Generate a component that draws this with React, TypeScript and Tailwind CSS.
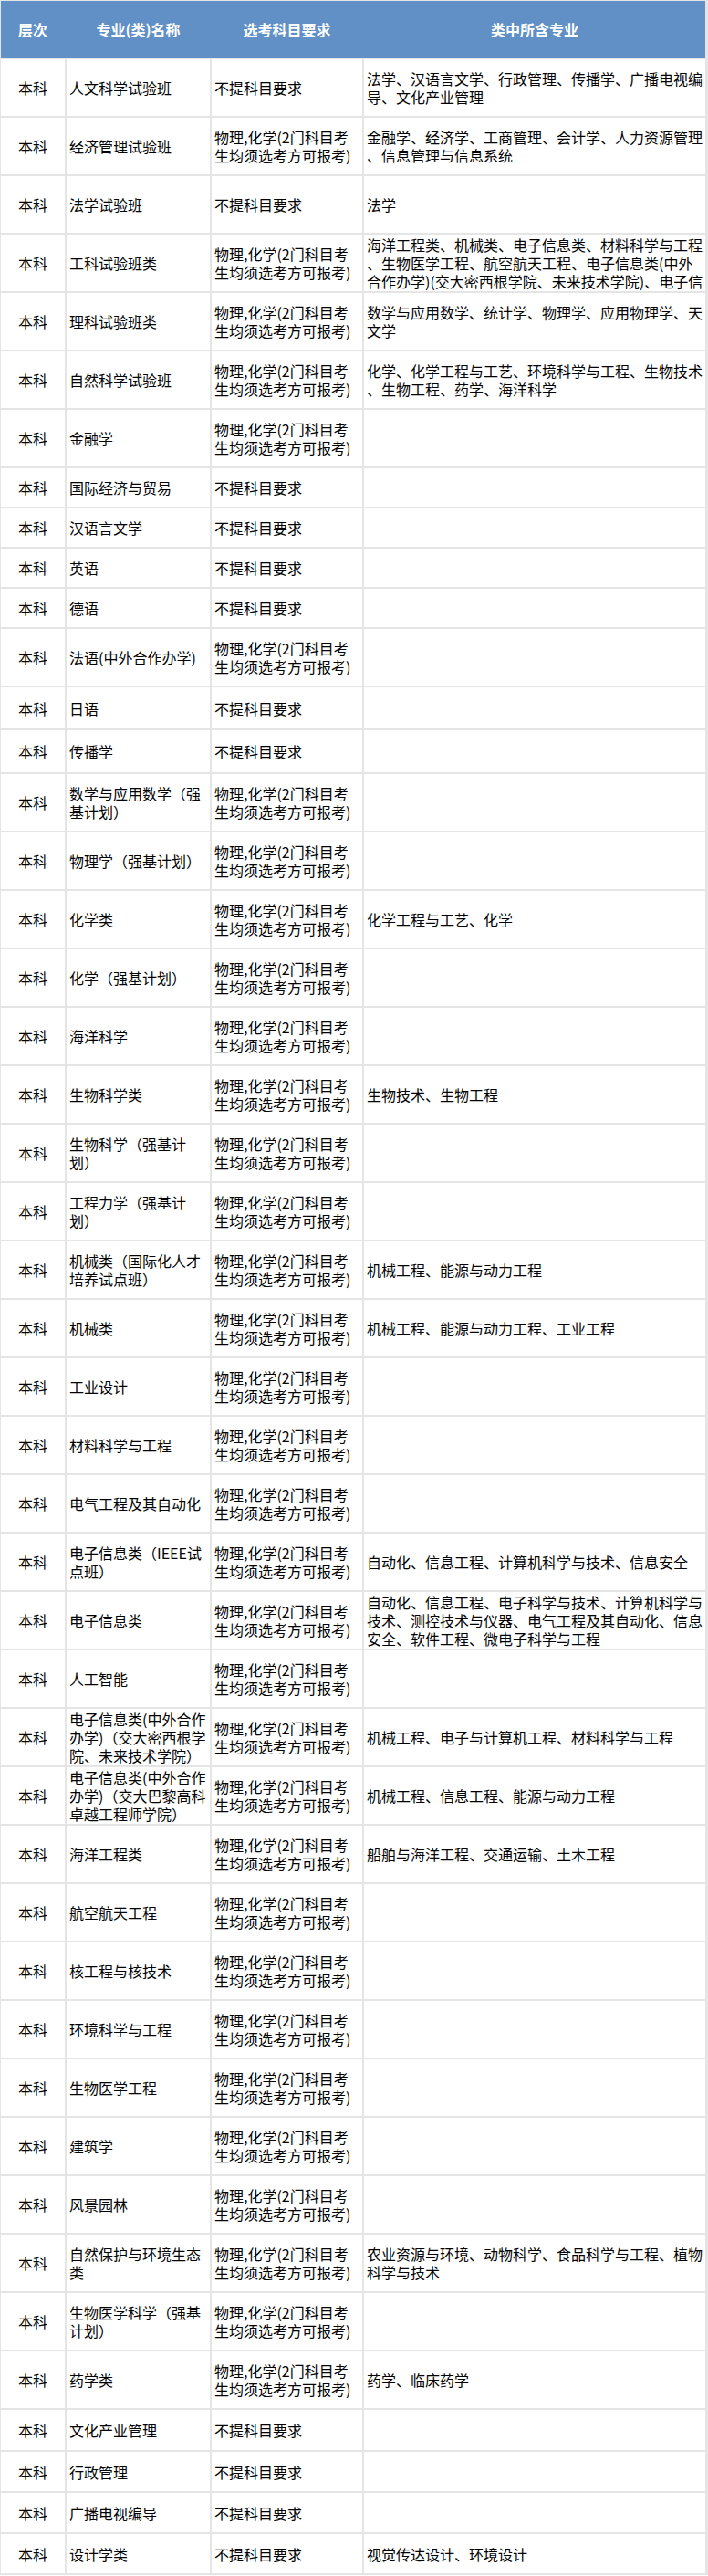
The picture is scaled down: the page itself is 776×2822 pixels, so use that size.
import React from 'react';

type Row = {
  name: string[];
  req: 'none' | 'pc';
  includes: string[];
  h: string;
};

const H62 = 'h-[62px]';

const rows: Row[] = [
  { name: ['人文科学试验班'], req: 'none', includes: ['法学、汉语言文学、行政管理、传播学、广播电视编', '导、文化产业管理'], h: H62 },
  { name: ['经济管理试验班'], req: 'pc', includes: ['金融学、经济学、工商管理、会计学、人力资源管理', '、信息管理与信息系统'], h: H62 },
  { name: ['法学试验班'], req: 'none', includes: ['法学'], h: H62 },
  {
    name: ['工科试验班类'],
    req: 'pc',
    includes: ['海洋工程类、机械类、电子信息类、材料科学与工程', '、生物医学工程、航空航天工程、电子信息类(中外', '合作办学)(交大密西根学院、未来技术学院)、电子信'],
    h: H62,
  },
  { name: ['理科试验班类'], req: 'pc', includes: ['数学与应用数学、统计学、物理学、应用物理学、天', '文学'], h: H62 },
  { name: ['自然科学试验班'], req: 'pc', includes: ['化学、化学工程与工艺、环境科学与工程、生物技术', '、生物工程、药学、海洋科学'], h: H62 },
  { name: ['金融学'], req: 'pc', includes: [], h: H62 },
  { name: ['国际经济与贸易'], req: 'none', includes: [], h: 'h-[42px]' },
  { name: ['汉语言文学'], req: 'none', includes: [], h: 'h-[42px]' },
  { name: ['英语'], req: 'none', includes: [], h: 'h-[42px]' },
  { name: ['德语'], req: 'none', includes: [], h: 'h-[42px]' },
  { name: ['法语(中外合作办学)'], req: 'pc', includes: [], h: H62 },
  { name: ['日语'], req: 'none', includes: [], h: 'h-[45px]' },
  { name: ['传播学'], req: 'none', includes: [], h: 'h-[46px]' },
  { name: ['数学与应用数学（强', '基计划）'], req: 'pc', includes: [], h: H62 },
  { name: ['物理学（强基计划）'], req: 'pc', includes: [], h: H62 },
  { name: ['化学类'], req: 'pc', includes: ['化学工程与工艺、化学'], h: H62 },
  { name: ['化学（强基计划）'], req: 'pc', includes: [], h: H62 },
  { name: ['海洋科学'], req: 'pc', includes: [], h: H62 },
  { name: ['生物科学类'], req: 'pc', includes: ['生物技术、生物工程'], h: H62 },
  { name: ['生物科学（强基计', '划）'], req: 'pc', includes: [], h: H62 },
  { name: ['工程力学（强基计', '划）'], req: 'pc', includes: [], h: H62 },
  { name: ['机械类（国际化人才', '培养试点班）'], req: 'pc', includes: ['机械工程、能源与动力工程'], h: H62 },
  { name: ['机械类'], req: 'pc', includes: ['机械工程、能源与动力工程、工业工程'], h: H62 },
  { name: ['工业设计'], req: 'pc', includes: [], h: H62 },
  { name: ['材料科学与工程'], req: 'pc', includes: [], h: H62 },
  { name: ['电气工程及其自动化'], req: 'pc', includes: [], h: H62 },
  { name: ['电子信息类（IEEE试', '点班）'], req: 'pc', includes: ['自动化、信息工程、计算机科学与技术、信息安全'], h: H62 },
  {
    name: ['电子信息类'],
    req: 'pc',
    includes: ['自动化、信息工程、电子科学与技术、计算机科学与', '技术、测控技术与仪器、电气工程及其自动化、信息', '安全、软件工程、微电子科学与工程'],
    h: H62,
  },
  { name: ['人工智能'], req: 'pc', includes: [], h: H62 },
  { name: ['电子信息类(中外合作', '办学)（交大密西根学', '院、未来技术学院）'], req: 'pc', includes: ['机械工程、电子与计算机工程、材料科学与工程'], h: H62 },
  { name: ['电子信息类(中外合作', '办学)（交大巴黎高科', '卓越工程师学院）'], req: 'pc', includes: ['机械工程、信息工程、能源与动力工程'], h: H62 },
  { name: ['海洋工程类'], req: 'pc', includes: ['船舶与海洋工程、交通运输、土木工程'], h: H62 },
  { name: ['航空航天工程'], req: 'pc', includes: [], h: H62 },
  { name: ['核工程与核技术'], req: 'pc', includes: [], h: H62 },
  { name: ['环境科学与工程'], req: 'pc', includes: [], h: H62 },
  { name: ['生物医学工程'], req: 'pc', includes: [], h: H62 },
  { name: ['建筑学'], req: 'pc', includes: [], h: H62 },
  { name: ['风景园林'], req: 'pc', includes: [], h: H62 },
  { name: ['自然保护与环境生态', '类'], req: 'pc', includes: ['农业资源与环境、动物科学、食品科学与工程、植物', '科学与技术'], h: H62 },
  { name: ['生物医学科学（强基', '计划）'], req: 'pc', includes: [], h: H62 },
  { name: ['药学类'], req: 'pc', includes: ['药学、临床药学'], h: H62 },
  { name: ['文化产业管理'], req: 'none', includes: [], h: 'h-[44px]' },
  { name: ['行政管理'], req: 'none', includes: [], h: 'h-[43px]' },
  { name: ['广播电视编导'], req: 'none', includes: [], h: 'h-[43px]' },
  { name: ['设计学类'], req: 'none', includes: ['视觉传达设计、环境设计'], h: 'h-[43px]' },
];

const reqLines = {
  none: ['不提科目要求'],
  pc: ['物理,化学(2门科目考', '生均须选考方可报考)'],
};

const Cell = ({ lines, center }: { lines: string[]; center?: boolean }) => (
  <div className={`flex items-center overflow-hidden bg-white px-[3px] ${center ? 'justify-center' : ''}`}>
    <div>
      {lines.map((l, i) => (
        <div key={i} className="whitespace-nowrap">
          {l}
        </div>
      ))}
    </div>
  </div>
);

const cols = 'grid grid-cols-[70px_157px_165px_374px] gap-x-[2px]';

export default function App() {
  return (
    <div className="w-[776px] bg-[#e5e5e5] pt-[1px] pb-[2px] pl-[1px] pr-[3px] font-['Noto_Sans_CJK_SC','Noto_Sans',sans-serif] text-[16px] leading-[20px] text-black">
      <div className="flex flex-col gap-y-[2px]">
        {/* header */}
        <div className={`${cols} h-[62px] bg-[#6090c5] font-bold text-white`}>
          <div className="flex items-center justify-center">层次</div>
          <div className="flex items-center justify-center">专业(类)名称</div>
          <div className="flex items-center justify-center">选考科目要求</div>
          <div className="flex items-center justify-center">类中所含专业</div>
        </div>

        {rows.map((r, i) => (
          <div key={i} className={`${cols} ${r.h}`}>
            <Cell lines={['本科']} center />
            <Cell lines={r.name} />
            <Cell lines={reqLines[r.req]} />
            <Cell lines={r.includes} />
          </div>
        ))}
      </div>
    </div>
  );
}
